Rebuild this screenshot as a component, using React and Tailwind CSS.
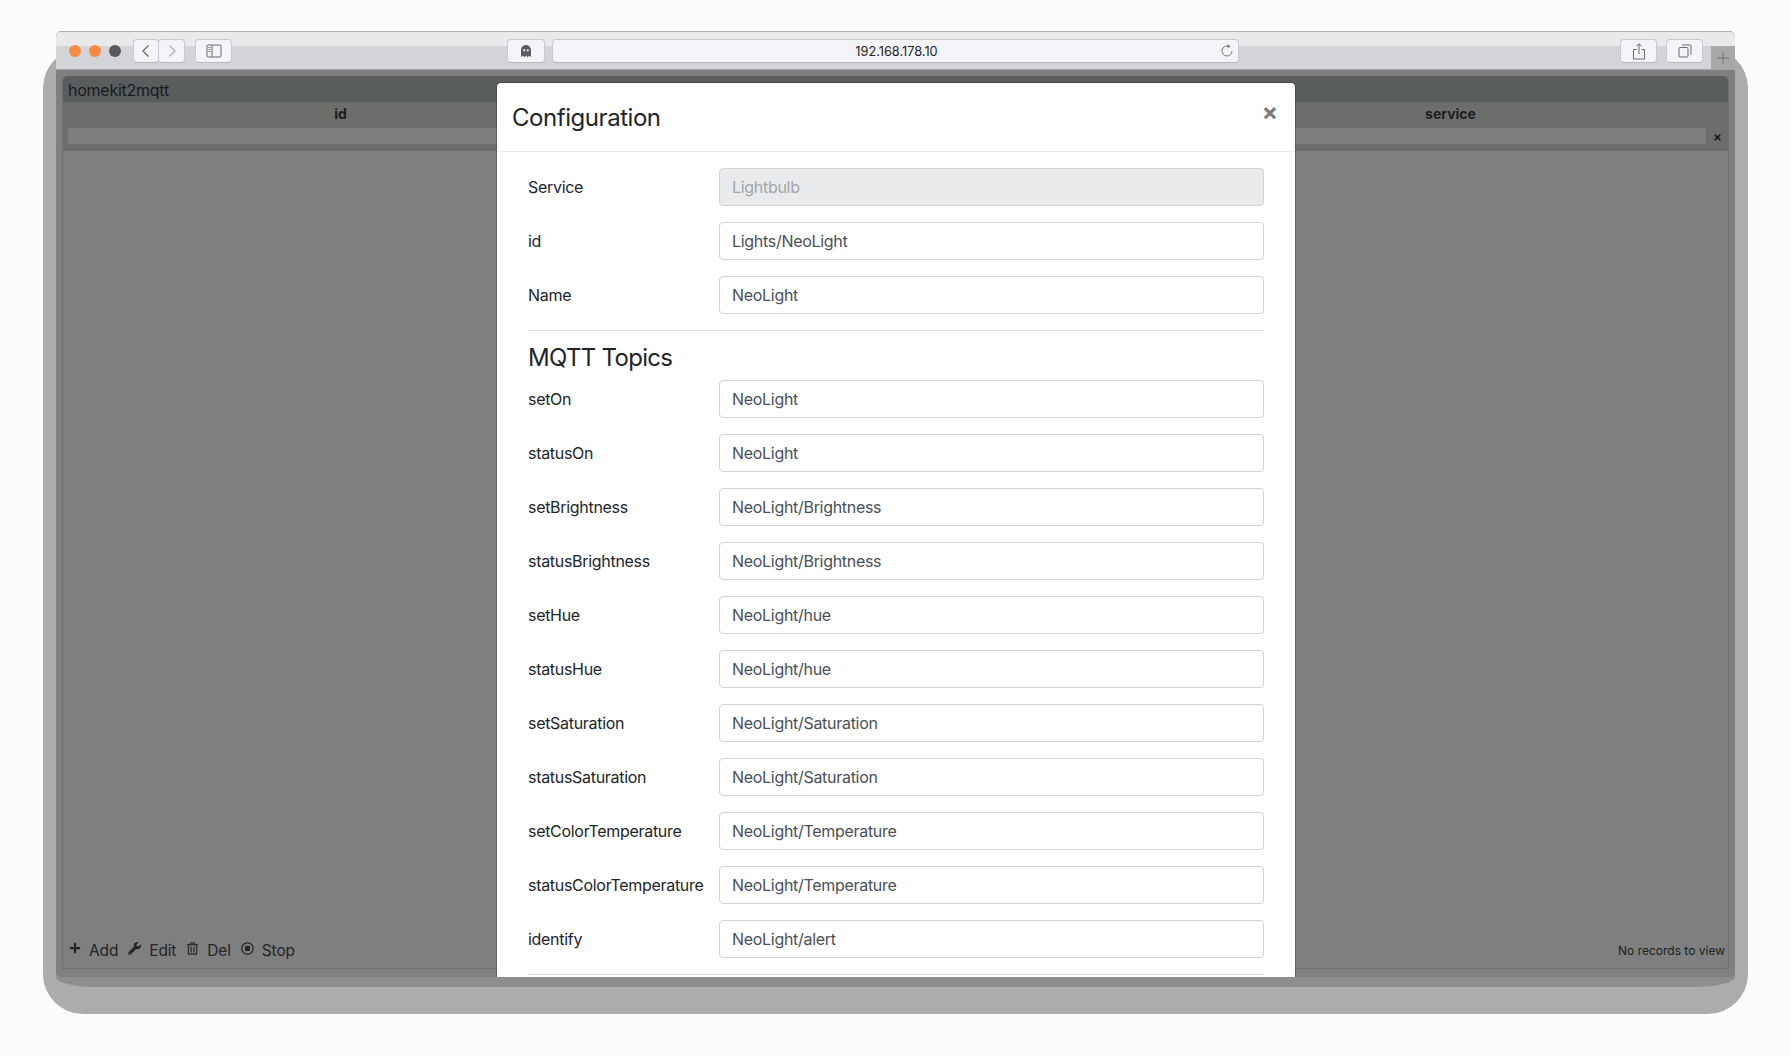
import React from "react";
import { FaPlus, FaWrench, FaRegTrashAlt, FaRegStopCircle } from "react-icons/fa";

const topics = [
  ["setOn", "NeoLight"],
  ["statusOn", "NeoLight"],
  ["setBrightness", "NeoLight/Brightness"],
  ["statusBrightness", "NeoLight/Brightness"],
  ["setHue", "NeoLight/hue"],
  ["statusHue", "NeoLight/hue"],
  ["setSaturation", "NeoLight/Saturation"],
  ["statusSaturation", "NeoLight/Saturation"],
  ["setColorTemperature", "NeoLight/Temperature"],
  ["statusColorTemperature", "NeoLight/Temperature"],
  ["identify", "NeoLight/alert"],
];

function Field({ label, value, disabled }) {
  return (
    <div className="flex items-center h-[38px] mb-4 shrink-0 tracking-[-0.3px]">
      <div className="w-[191px] shrink-0 text-[16px] text-[#212529] whitespace-nowrap">{label}</div>
      <div
        className={
          disabled
            ? "w-[545px] h-[38px] flex items-center px-3 rounded-[4px] border border-[#d2d3d8] bg-[#e9eaec] text-[16px] text-[#a3a6aa]"
            : "w-[545px] h-[38px] flex items-center px-3 rounded-[4px] border border-[#d2d3d8] bg-white text-[16px] text-[#495057]"
        }
      >
        {value}
      </div>
    </div>
  );
}

function ToolButton({ className, children }) {
  return (
    <div className={"h-[24px] flex items-center justify-center rounded-[4px] border border-[#c9c9cc] border-b-[#b9b9bc] bg-[#f4f4f8] shrink-0 " + className}>
      {children}
    </div>
  );
}

function Dot({ className }) {
  return <div className={"w-[12px] h-[12px] rounded-full shrink-0 " + className} />;
}

export default function App() {
  return (
    <div className="w-[1791px] h-[1056px] bg-[#fbfbfb] flex flex-col overflow-hidden font-['Inter',sans-serif]">
      <div className="ml-[43px] w-[1705px] mt-[48px] h-[966px] rounded-[40px] bg-[#acacac] flex flex-col shrink-0">
        <div className="ml-[13px] w-[1679px] -mt-[17px] h-[956px] bg-[#8e8e8e] rounded-bl-[40px_10px] rounded-br-[40px_10px] rounded-t-[6px] shrink-0">
          <div className="relative h-[946px] flex flex-col bg-[#7f7f7f] rounded-t-[6px] rounded-b-[5px] overflow-hidden">
            {/* browser toolbar */}
            <div className="h-[39px] shrink-0 flex items-start pt-[7px] border-t border-t-[#b3b3b3] border-b border-b-[#a3a3a5] bg-[linear-gradient(#e9e9eb_14px,#d3d4d8_14px)]">
              <div className="flex items-center gap-2 pl-[13px] h-[23px]">
                <Dot className="bg-[#f68b44]" />
                <Dot className="bg-[#f68b44]" />
                <Dot className="bg-[#57595a]" />
              </div>
              <ToolButton className="ml-[12px] w-[26px]">
                <svg width="10" height="14" viewBox="0 0 10 14" fill="none" stroke="#707072" strokeWidth="1.4">
                  <path d="M7.5 1.5 2 7l5.5 5.5" />
                </svg>
              </ToolButton>
              <ToolButton className="-ml-px w-[27px]">
                <svg width="10" height="14" viewBox="0 0 10 14" fill="none" stroke="#b4b4b7" strokeWidth="1.4">
                  <path d="M2.5 1.5 8 7l-5.5 5.5" />
                </svg>
              </ToolButton>
              <ToolButton className="ml-[10px] w-[37px]">
                <svg width="16" height="14" viewBox="0 0 16 14" fill="none" stroke="#6a6a6d" strokeWidth="1">
                  <rect x="1" y="1" width="14" height="12" rx="1" />
                  <path d="M6 1v12" />
                  <path d="M2.5 3.5h2M2.5 5.5h2M2.5 7.5h2" strokeWidth="0.9" />
                </svg>
              </ToolButton>
              <ToolButton className="ml-[275px] w-[38px]">
                <svg width="12" height="14" viewBox="0 0 12 14" fill="#5c5c60">
                  <path fillRule="evenodd" d="M1 13V6a5 5 0 0 1 10 0v7l-1.7-1.3L7.7 13 6 11.7 4.3 13l-1.6-1.3L1 13Zm3.2-7.8a1 1 0 0 0 0 2.2 1 1 0 0 0 0-2.2Zm3.6 0a1 1 0 0 0 0 2.2 1 1 0 0 0 0-2.2Z" />
                </svg>
              </ToolButton>
              <div className="relative ml-[7px] w-[687px] h-[24px] flex items-center justify-center rounded-[4px] border border-[#c9c9cc] border-b-[#b9b9bc] bg-[#f4f4f8] shrink-0">
                <span className="text-[12.75px] text-[#222] leading-none mt-[2px] ml-[2px]">192.168.178.10</span>
                <svg className="absolute right-[4px] top-[4px]" width="14" height="14" viewBox="0 0 14 14" fill="none" stroke="#77777a" strokeWidth="1">
                  <path d="M8.5 2.2A5 5 0 1 0 12 7" />
                  <path d="M7.5 0.2 10.5 2.3 7.5 4.4Z" fill="#77777a" stroke="none" />
                </svg>
              </div>
              <ToolButton className="ml-[381px] w-[37px]">
                <svg width="14" height="17" viewBox="0 0 14 17" fill="none" stroke="#69696c" strokeWidth="1">
                  <path d="M4.5 6.5H1.5v9.5h11V6.5h-3" />
                  <path d="M7 11V1M4.5 3.2 7 .8l2.5 2.4" />
                </svg>
              </ToolButton>
              <ToolButton className="ml-[9px] w-[37px]">
                <svg width="14" height="14" viewBox="0 0 14 14" fill="none" stroke="#69696c" strokeWidth="1">
                  <rect x="1" y="3.5" width="9" height="9.5" rx="1" />
                  <path d="M4 1h8a1 1 0 0 1 1 1v7.5a1 1 0 0 1-1 1" />
                </svg>
              </ToolButton>
              <div className="ml-[8px] mt-[7px] w-[24px] h-[23px] bg-[#a8a8a9] flex items-center justify-center shrink-0">
                <svg width="12" height="12" viewBox="0 0 12 12" stroke="#707072" strokeWidth="1">
                  <path d="M6 0v12M0 6h12" />
                </svg>
              </div>
            </div>

            {/* grid panel */}
            <div className="mx-[6px] mt-[6px] mb-[8px] flex-1 flex flex-col rounded-t-[5px] rounded-b-[3px] border-x border-b border-[#6f6f6f] min-h-0">
              <div className="h-[26px] shrink-0 bg-[#5a5d5d] rounded-t-[5px] flex items-center pl-[5px] pt-[2px] text-[16px] tracking-[-0.25px] text-[#191b1d] leading-none">
                homekit2mqtt
              </div>
              <div className="h-[49px] shrink-0 bg-[#6d6e6c] flex flex-col">
                <div className="h-[26px] pb-[3px] grid grid-cols-3 items-center text-center text-[14px] font-bold text-[#1c1e20]">
                  <div>id</div>
                  <div />
                  <div>service</div>
                </div>
                <div className="flex items-center pl-[5px]">
                  <div className="w-[1638px] h-[16px] bg-[#7e7e7e] rounded-[3px]" />
                  <div className="ml-[7px] mt-[3px] text-[13px] font-bold text-[#191b1d] leading-none">×</div>
                </div>
              </div>
              <div className="flex-1" />
              <div className="h-[38px] shrink-0 flex items-center justify-between px-[6px] pt-[3px]">
                <div className="flex items-center text-[15.5px] tracking-[-0.15px] text-[#232527]">
                  <FaPlus className="w-[12px] h-[12px] -mt-[5px]" />
                  <span className="ml-[8px]">Add</span>
                  <FaWrench className="ml-[10px] w-[13px] h-[13px] -mt-[5px]" />
                  <span className="ml-[8px]">Edit</span>
                  <FaRegTrashAlt className="ml-[11px] w-[11px] h-[13px] -mt-[5px]" />
                  <span className="ml-[9px]">Del</span>
                  <FaRegStopCircle className="ml-[10px] w-[13px] h-[13px] -mt-[5px]" />
                  <span className="ml-[8px]">Stop</span>
                </div>
                <div className="text-[12px] text-[#1c1e20] mr-[-3px]">No records to view</div>
              </div>
            </div>

            {/* modal */}
            <div className="absolute left-[440px] top-[51px] w-[800px] h-[900px] bg-white bg-clip-padding border border-black/20 rounded-[5px] flex flex-col">
              <div className="h-[69px] shrink-0 relative flex items-center pl-[15px] pt-[1px] border-b border-b-[#e9ecef]">
                <div className="text-[24px] tracking-[-0.45px] leading-none text-[#212529]">Configuration</div>
                <div className="absolute right-[17px] top-[17px] text-[24px] font-bold leading-none text-[#7b7b7b]">×</div>
              </div>
              <div className="pt-[16px] pl-[31px] flex flex-col">
                <Field label="Service" value="Lightbulb" disabled />
                <Field label="id" value="Lights/NeoLight" />
                <Field label="Name" value="NeoLight" />
                <div className="w-[736px] h-px bg-[#d9dbdd] shrink-0" />
                <div className="mt-[12px] mb-[8px] h-[29px] flex items-center text-[24px] tracking-[-0.7px] leading-none text-[#212529]">MQTT Topics</div>
                {topics.map(([l, v]) => (
                  <Field key={l} label={l} value={v} />
                ))}
                <div className="w-[736px] h-px bg-[#d9dbdd] shrink-0" />
              </div>
            </div>
          </div>
        </div>
      </div>
    </div>
  );
}
